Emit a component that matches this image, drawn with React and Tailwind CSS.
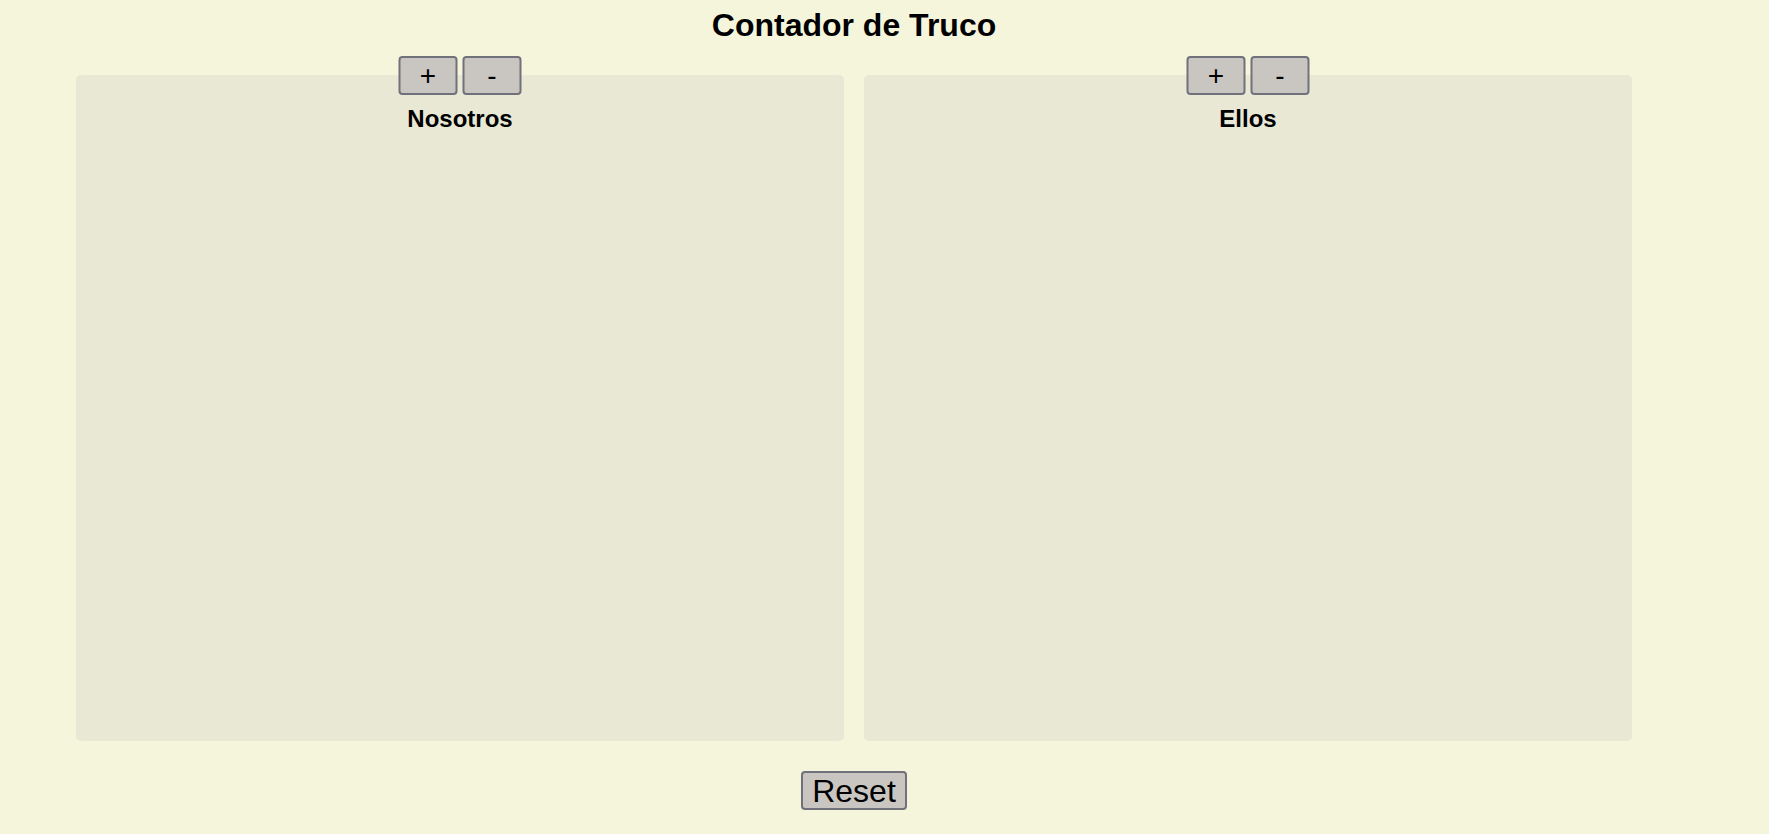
export default function App() {
  const teams = ["Nosotros", "Ellos"];

  return (
    <div className="min-h-screen h-[834px] bg-[#f5f5dc] text-black font-['Liberation_Sans',Arial,sans-serif]">
      <div className="w-[1708px] flex flex-col items-center">
        <h1 className="text-[32px] leading-[37px] font-bold pt-[7px]">Contador de Truco</h1>

        {/* Teams */}
        <div className="flex gap-[20px] mt-[31px]">
          {teams.map((team) => (
            <div key={team} className="relative w-[768px] h-[666px] rounded-[5px] bg-[#e9e8d4] pt-[30px] flex flex-col items-center">
              <div className="absolute -top-[19px] left-1/2 -translate-x-1/2 flex gap-[5px]">
                <button className="w-[59px] h-[39px] rounded-[4px] border-2 border-[#71717b] bg-[#c9c6c1] text-[28px] leading-none flex items-center justify-center">
                  +
                </button>
                <button className="w-[59px] h-[39px] rounded-[4px] border-2 border-[#71717b] bg-[#c9c6c1] text-[28px] leading-none flex items-center justify-center">
                  -
                </button>
              </div>
              <h2 className="text-[24px] leading-[28px] font-bold">{team}</h2>
            </div>
          ))}
        </div>

        <button className="mt-[30px] w-[106px] h-[39px] rounded-[4px] border-2 border-[#71717b] bg-[#c9c6c1] text-[32px] leading-none flex items-center justify-center">
          Reset
        </button>
      </div>
    </div>
  );
}
